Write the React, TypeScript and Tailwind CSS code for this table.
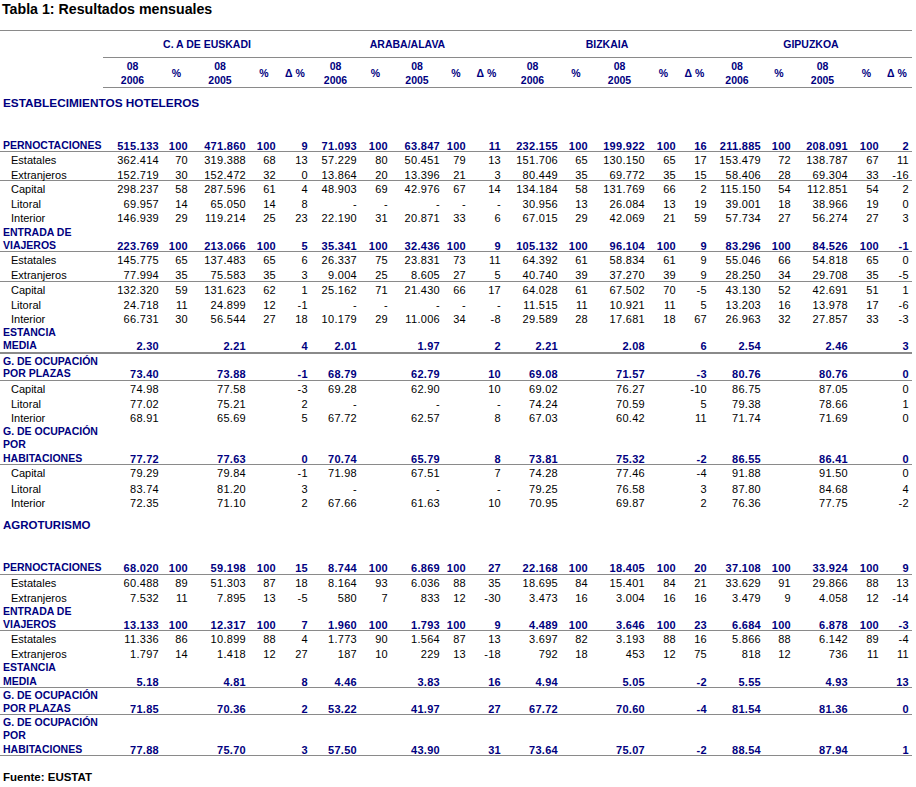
import React from 'react'
import clsx from 'clsx'

const GRID =
  'grid grid-cols-[103px_59px_29px_58px_30px_32px_49px_31px_52px_26px_35px_57px_30px_57px_31px_31px_54px_30px_57px_31px_30px]'

// split a row of numbers
const s = (str: string) => str.split(' ')

// occupancy rows: only value 2006, value 2005 and delta per region
const o = (str: string) => {
  const v = str.split(' ')
  const out: string[] = []
  for (let i = 0; i < 4; i++) {
    out.push(v[i * 3], '', v[i * 3 + 1], '', v[i * 3 + 2])
  }
  return out
}

type RowProps = {
  label: string
  vals?: string[]
  bold?: boolean
  sub?: boolean
  h: string
  line?: 'thin' | 'thick'
}

const Row: React.FC<RowProps> = ({ label, vals = [], bold, sub, h, line }) => {
  return (
    <div
      className={clsx(
        GRID,
        h,
        line === 'thin' && 'border-b border-[#8a8a8a]',
        line === 'thick' && 'border-b-2 border-[#8a8a8a]',
        bold ? 'font-bold text-[#000080]' : 'text-black'
      )}
    >
      <div
        className={clsx(
          'flex items-center whitespace-nowrap',
          sub ? 'pl-[11px] text-[11px]' : 'pl-[3px] text-[10.5px]'
        )}
      >
        {label}
      </div>
      {vals.map((v, i) => (
        <div key={i} className="flex items-center justify-end pr-[3px] text-[11px] tracking-[0.3px]">
          {v}
        </div>
      ))}
    </div>
  )
}

const regions = ['C. A DE EUSKADI', 'ARABA/ALAVA', 'BIZKAIA', 'GIPUZKOA']

const App: React.FC = () => {
  return (
    <div className="min-h-screen bg-white font-['Liberation_Sans',_Arial,_sans-serif]">
      <div className="w-[912px]">
        {/* title */}
        <div className="h-[30px]">
          <div className="pl-[2px] text-[14.2px] font-bold leading-[18px] text-black">Tabla 1: Resultados mensuales</div>
        </div>

        {/* region header */}
        <div className={clsx(GRID, 'h-[28px] border-t border-[#8a8a8a] text-[10.5px] font-bold text-[#000080]')}>
          <div />
          {regions.map((r) => (
            <div key={r} className="col-span-5 flex items-center justify-center border-b border-[#8a8a8a] pt-[2px]">
              {r}
            </div>
          ))}
        </div>

        {/* sub header */}
        <div className={clsx(GRID, 'h-[28px] text-[10.5px] font-bold leading-[13.5px] text-[#000080]')}>
          <div />
          {regions.map((r) => (
            <React.Fragment key={r}>
              <div className="flex flex-col items-center justify-center border-b border-[#8a8a8a] pt-[2px]">
                <span>08</span>
                <span>2006</span>
              </div>
              <div className="flex items-center justify-center border-b border-[#8a8a8a] pt-[2px]">%</div>
              <div className="flex flex-col items-center justify-center border-b border-[#8a8a8a] pt-[2px]">
                <span>08</span>
                <span>2005</span>
              </div>
              <div className="flex items-center justify-center border-b border-[#8a8a8a] pt-[2px]">%</div>
              <div className="flex items-center justify-center border-b border-[#8a8a8a] pt-[2px]">Δ %</div>
            </React.Fragment>
          ))}
        </div>

        {/* establecimientos hoteleros */}
        <div className="flex h-[35px] items-center pl-[3px] text-[11.8px] font-bold text-[#000080]">ESTABLECIMIENTOS HOTELEROS</div>
        <div className="h-[17px]" />
        <Row label="PERNOCTACIONES" bold h="h-[14px]" line="thin" vals={s('515.133 100 471.860 100 9 71.093 100 63.847 100 11 232.155 100 199.922 100 16 211.885 100 208.091 100 2')} />
        <Row label="Estatales" sub h="h-[15px]" vals={s('362.414 70 319.388 68 13 57.229 80 50.451 79 13 151.706 65 130.150 65 17 153.479 72 138.787 67 11')} />
        <Row label="Extranjeros" sub h="h-[14px]" line="thin" vals={s('152.719 30 152.472 32 0 13.864 20 13.396 21 3 80.449 35 69.772 35 15 58.406 28 69.304 33 -16')} />
        <Row label="Capital" sub h="h-[15px]" vals={s('298.237 58 287.596 61 4 48.903 69 42.976 67 14 134.184 58 131.769 66 2 115.150 54 112.851 54 2')} />
        <Row label="Litoral" sub h="h-[14px]" vals={s('69.957 14 65.050 14 8 - - - - - 30.956 13 26.084 13 19 39.001 18 38.966 19 0')} />
        <Row label="Interior" sub h="h-[15px]" vals={s('146.939 29 119.214 25 23 22.190 31 20.871 33 6 67.015 29 42.069 21 59 57.734 27 56.274 27 3')} />
        <Row label="ENTRADA DE" bold h="h-[13px]" />
        <Row label="VIAJEROS" bold h="h-[14px]" line="thin" vals={s('223.769 100 213.066 100 5 35.341 100 32.436 100 9 105.132 100 96.104 100 9 83.296 100 84.526 100 -1')} />
        <Row label="Estatales" sub h="h-[15px]" vals={s('145.775 65 137.483 65 6 26.337 75 23.831 73 11 64.392 61 58.834 61 9 55.046 66 54.818 65 0')} />
        <Row label="Extranjeros" sub h="h-[15px]" line="thin" vals={s('77.994 35 75.583 35 3 9.004 25 8.605 27 5 40.740 39 37.270 39 9 28.250 34 29.708 35 -5')} />
        <Row label="Capital" sub h="h-[15px]" vals={s('132.320 59 131.623 62 1 25.162 71 21.430 66 17 64.028 61 67.502 70 -5 43.130 52 42.691 51 1')} />
        <Row label="Litoral" sub h="h-[14px]" vals={s('24.718 11 24.899 12 -1 - - - - - 11.515 11 10.921 11 5 13.203 16 13.978 17 -6')} />
        <Row label="Interior" sub h="h-[14px]" vals={s('66.731 30 56.544 27 18 10.179 29 11.006 34 -8 29.589 28 17.681 18 67 26.963 32 27.857 33 -3')} />
        <Row label="ESTANCIA" bold h="h-[13px]" />
        <Row label="MEDIA" bold h="h-[16px]" line="thick" vals={o('2.30 2.21 4 2.01 1.97 2 2.21 2.08 6 2.54 2.46 3')} />
        <Row label="G. DE OCUPACIÓN" bold h="h-[12px]" />
        <Row label="POR PLAZAS" bold h="h-[15px]" line="thin" vals={o('73.40 73.88 -1 68.79 62.79 10 69.08 71.57 -3 80.76 80.76 0')} />
        <Row label="Capital" sub h="h-[15px]" vals={o('74.98 77.58 -3 69.28 62.90 10 69.02 76.27 -10 86.75 87.05 0')} />
        <Row label="Litoral" sub h="h-[14px]" vals={o('77.02 75.21 2 - - - 74.24 70.59 5 79.38 78.66 1')} />
        <Row label="Interior" sub h="h-[14px]" vals={o('68.91 65.69 5 67.72 62.57 8 67.03 60.42 11 71.74 71.69 0')} />
        <Row label="G. DE OCUPACIÓN" bold h="h-[13px]" />
        <Row label="POR" bold h="h-[14px]" />
        <Row label="HABITACIONES" bold h="h-[14px]" line="thin" vals={o('77.72 77.63 0 70.74 65.79 8 73.81 75.32 -2 86.55 86.41 0')} />
        <Row label="Capital" sub h="h-[16px]" vals={o('79.29 79.84 -1 71.98 67.51 7 74.28 77.46 -4 91.88 91.50 0')} />
        <Row label="Litoral" sub h="h-[14px]" vals={o('83.74 81.20 3 - - - 79.25 76.58 3 87.80 84.68 4')} />
        <Row label="Interior" sub h="h-[14px]" vals={o('72.35 71.10 2 67.66 61.63 10 70.95 69.87 2 76.36 77.75 -2')} />

        {/* agroturismo */}
        <div className="flex h-[34px] items-center pl-[3px] text-[11.5px] font-bold text-[#000080]">AGROTURISMO</div>
        <div className="h-[17px]" />
        <Row label="PERNOCTACIONES" bold h="h-[15px]" line="thin" vals={s('68.020 100 59.198 100 15 8.744 100 6.869 100 27 22.168 100 18.405 100 20 37.108 100 33.924 100 9')} />
        <Row label="Estatales" sub h="h-[15px]" vals={s('60.488 89 51.303 87 18 8.164 93 6.036 88 35 18.695 84 15.401 84 21 33.629 91 29.866 88 13')} />
        <Row label="Extranjeros" sub h="h-[14px]" vals={s('7.532 11 7.895 13 -5 580 7 833 12 -30 3.473 16 3.004 16 16 3.479 9 4.058 12 -14')} />
        <Row label="ENTRADA DE" bold h="h-[13px]" />
        <Row label="VIAJEROS" bold h="h-[14px]" line="thin" vals={s('13.133 100 12.317 100 7 1.960 100 1.793 100 9 4.489 100 3.646 100 23 6.684 100 6.878 100 -3')} />
        <Row label="Estatales" sub h="h-[15px]" vals={s('11.336 86 10.899 88 4 1.773 90 1.564 87 13 3.697 82 3.193 88 16 5.866 88 6.142 89 -4')} />
        <Row label="Extranjeros" sub h="h-[14px]" vals={s('1.797 14 1.418 12 27 187 10 229 13 -18 792 18 453 12 75 818 12 736 11 11')} />
        <Row label="ESTANCIA" bold h="h-[14px]" />
        <Row label="MEDIA" bold h="h-[14px]" line="thin" vals={o('5.18 4.81 8 4.46 3.83 16 4.94 5.05 -2 5.55 4.93 13')} />
        <Row label="G. DE OCUPACIÓN" bold h="h-[13px]" />
        <Row label="POR PLAZAS" bold h="h-[14px]" line="thin" vals={o('71.85 70.36 2 53.22 41.97 27 67.72 70.60 -4 81.54 81.36 0')} />
        <Row label="G. DE OCUPACIÓN" bold h="h-[13px]" />
        <Row label="POR" bold h="h-[14px]" />
        <Row label="HABITACIONES" bold h="h-[14px]" line="thin" vals={o('77.88 75.70 3 57.50 43.90 31 73.64 75.07 -2 88.54 87.94 1')} />

        <div className="mt-[14px] h-[14px] pl-[3px] text-[11.5px] font-bold leading-[14px] text-black">Fuente: EUSTAT</div>
      </div>
    </div>
  )
}

export default App
